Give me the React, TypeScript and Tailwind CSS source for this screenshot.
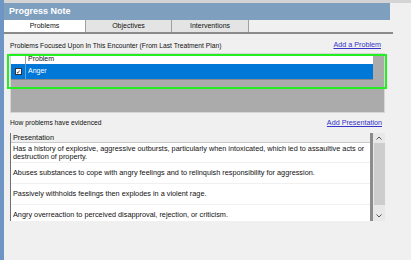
import React from 'react'

const rows = [
  ['Has a history of explosive, aggressive outbursts, particularly when intoxicated, which led to assaultive acts or', 'destruction of property.'],
  ['Abuses substances to cope with angry feelings and to relinquish responsibility for aggression.'],
  ['Passively withholds feelings then explodes in a violent rage.'],
  ['Angry overreaction to perceived disapproval, rejection, or criticism.'],
]

const Chevron = ({ up }: { up?: boolean }) => (
  <svg width="6" height="4" viewBox="0 0 6 4" className="my-[3px]">
    <path d={up ? 'M0.5 3.5 L3 1 L5.5 3.5' : 'M0.5 0.5 L3 3 L5.5 0.5'} fill="none" stroke="#555" strokeWidth="1" />
  </svg>
)

const App = () => {
  return (
    <div className="w-[411px] h-[260px] bg-[#f0f0f0] flex overflow-hidden font-['Liberation_Sans',Arial,sans-serif] text-[#111]">
      <div className="w-[4px] h-full bg-[#6f95c4]" />
      <div className="flex-1 flex flex-col">
        <div className="h-[3px] bg-[#d4d4d4]" />
        <div className="w-[386px] h-[17px] bg-[#7f9fbf] flex items-center pl-[5px] text-white font-bold text-[9px]">
          Progress Note
        </div>
        {/* tabs */}
        <div className="w-[389px] h-[14px] flex border-b-2 border-[#8a8a8a] text-[7px]">
          <div className="w-[82px] bg-white flex items-center justify-center border-r border-[#a0a0a0]">Problems</div>
          <div className="w-[86px] bg-[#e4e4e4] flex items-center justify-center border-r border-[#a0a0a0]">Objectives</div>
          <div className="w-[77px] bg-[#e4e4e4] flex items-center justify-center border-r border-[#a0a0a0]">Interventions</div>
        </div>

        <div className="w-[381px] pl-[6px] flex flex-col">
          <div className="h-[19px] flex items-end justify-between pb-[2px] text-[6.7px]">
            <span>Problems Focused Upon In This Encounter (From Last Treatment Plan)</span>
            <span className="text-[#3434c8] underline text-[7.2px] pr-[4px]">Add a Problem</span>
          </div>

          {/* problems grid */}
          <div className="relative h-[60px] bg-[#ababab] border border-[#d6d6d6] flex flex-col">
            <div className="flex w-[362px] h-[10px] bg-white text-[7px]">
              <div className="w-[15px] border-r border-[#a0a0a0]" />
              <div className="pl-[2px] leading-[10px]">Problem</div>
            </div>
            <div className="flex w-[362px] h-[16px] bg-[#0078d7] border-b border-[#8a8a8a] text-white text-[7px]">
              <div className="w-[15px] flex items-center justify-center border-r border-[#6aa0d8]">
                <div className="w-[7px] h-[7px] bg-white border border-[#333] flex items-center justify-center text-[6px] leading-none text-black">✓</div>
              </div>
              <div className="pl-[2px] flex items-center">Anger</div>
            </div>
            <div className="absolute left-[-4px] top-[0px] w-[380px] h-[35px] border-2 border-[#22ee22]" />
          </div>

          <div className="h-[20px] flex items-center justify-between text-[6.7px]">
            <span>How problems have evidenced</span>
            <span className="text-[#3434c8] underline text-[7.2px] pr-[3px]">Add Presentation</span>
          </div>

          {/* presentation list */}
          <div className="h-[88px] flex border-l border-[#707070] bg-white text-[7.3px]">
            <div className="w-[359px] flex flex-col">
              <div className="h-[10px] bg-[#f0f0f0] border-b border-[#c8c8c8] pl-[2px] leading-[10px]">Presentation</div>
              <div className="h-[20px] shrink-0 border-b border-[#f0f0f0] pl-[2px] pt-[2px] leading-[8px]">
                {rows[0].map((l, j) => (
                  <div key={j}>{l}</div>
                ))}
              </div>
              {rows.slice(1).map((r, i) => (
                <div key={i} className="h-[21px] shrink-0 border-b border-[#f0f0f0] pl-[2px] flex items-center">
                  {r[0]}
                </div>
              ))}
            </div>
            <div className="w-[3px] bg-[#8c8c8c]" />
            <div className="w-[12px] bg-[#e8e8e8] flex flex-col items-center">
              <Chevron up />
              <div className="w-[11px] flex-1 bg-[#cdcdcd] mb-[6px]" />
              <Chevron />
            </div>
          </div>
        </div>
      </div>
    </div>
  )
}

export default App
